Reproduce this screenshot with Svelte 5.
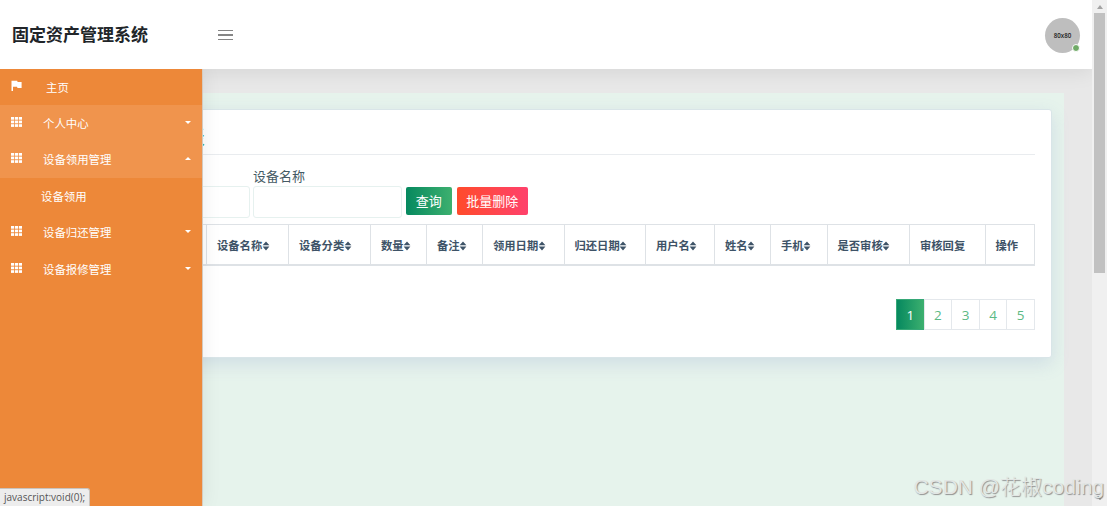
<script>
  let openMenu = 2;
  let currentPage = 1;
  let deviceNo = '';
  let deviceName = '';

  const menus = [
    { label: '个人中心', light: true, children: [] },
    { label: '设备领用管理', light: true, children: ['设备领用'] },
    { label: '设备归还管理', children: [] },
    { label: '设备报修管理', children: [] }
  ];

  // the first column only holds the row checkboxes
  const columns = [
    { label: '', width: 67 },
    { label: '设备编号', width: 81, sortable: true },
    { label: '设备名称', width: 82, sortable: true },
    { label: '设备分类', width: 82, sortable: true },
    { label: '数量', width: 56, sortable: true },
    { label: '备注', width: 56, sortable: true },
    { label: '领用日期', width: 81.5, sortable: true },
    { label: '归还日期', width: 81.5, sortable: true },
    { label: '用户名', width: 69, sortable: true },
    { label: '姓名', width: 56, sortable: true },
    { label: '手机', width: 56.5, sortable: true },
    { label: '是否审核', width: 82.5, sortable: true },
    { label: '审核回复', width: 75.5 },
    { label: '操作', width: 50 }
  ];

  const pages = [1, 2, 3, 4, 5];
</script>

<div class="page">
  <header class="topbar">
    <h1>固定资产管理系统</h1>
    <button class="toggle" aria-label="menu"><span></span><span></span><span></span></button>
    <div class="avatar"><span>80x80</span><i class="status"></i></div>
  </header>

  <div class="body">
    <nav class="sidebar">
      <a class="item home" href="javascript:void(0);">
        <svg class="flag" width="11" height="12" viewBox="0 0 11 12"><path d="M0.5 0.7h5.7l.4 1.4h4v6H6.5L6 6.7H2V11H.5z" /></svg>
        <span>主页</span>
      </a>
      {#each menus as menu, i}
        <a class="item" class:light={menu.light} href="javascript:void(0);">
          <svg class="grid" width="11" height="10" viewBox="0 0 11 10">
            {#each [0, 1, 2] as row}
              {#each [0, 1, 2] as col}
                <rect x={col * 4} y={row * 3.6} width="3.2" height="2.7" />
              {/each}
            {/each}
          </svg>
          <span>{menu.label}</span>
          <i class="caret" class:up={i + 1 === openMenu}></i>
        </a>
        {#if i + 1 === openMenu}
          {#each menu.children as child}
            <a class="item sub" href="javascript:void(0);">{child}</a>
          {/each}
        {/if}
      {/each}
    </nav>

    <main class="panel">
      <section class="card">
        <h3>列表</h3>
        <form class="search">
          <label>设备编号<input bind:value={deviceNo} /></label>
          <label>设备名称<input bind:value={deviceName} /></label>
          <button type="button" class="btn query">查询</button>
          <button type="button" class="btn delete">批量删除</button>
        </form>
        <div class="table">
          {#each columns as column}
            <div class="th" style="width: {column.width}px">
              {column.label}{#if column.sortable}<svg width="8" height="10" viewBox="0 0 8 10"><path d="M4 .4L7.4 4.3H.6zM4 9.6L7.4 5.5H.6z" /></svg>{/if}
            </div>
          {/each}
        </div>
        <div class="pagination">
          {#each pages as page}
            <button class:active={page === currentPage} on:click={() => (currentPage = page)}>{page}</button>
          {/each}
        </div>
      </section>
    </main>
  </div>

  <div class="scrollbar">
    <i class="arrow up"></i>
    <div class="thumb"></div>
    <i class="arrow down"></i>
  </div>
  <div class="link-status">javascript:void(0);</div>
  <div class="watermark">CSDN @花椒coding</div>
</div>

<style>
  :global(body) {
    margin: 0;
    overflow: hidden;
  }

  .page {
    position: relative;
    box-sizing: border-box;
    width: 1107px;
    height: 506px;
    padding-right: 15px;
    overflow: hidden;
    background: #e8e8e8;
    color: #455a64;
    font-family: 'Open Sans', 'Noto Sans CJK SC', sans-serif;
  }

  button,
  input {
    box-sizing: border-box;
    font: inherit;
  }

  .topbar {
    position: relative;
    z-index: 2;
    display: flex;
    align-items: center;
    box-sizing: border-box;
    height: 69px;
    padding: 0 12px;
    background: #fff;
    box-shadow: 0 2px 20px rgba(0, 0, 0, 0.09);
  }

  h1 {
    width: 206px;
    margin: 0;
    color: #212529;
    font-size: 17px;
    line-height: 24px;
    font-weight: 700;
  }

  .toggle {
    display: flex;
    flex-direction: column;
    gap: 3px;
    width: 15px;
    margin-top: 1px;
    padding: 0;
    border: 0;
    background: none;
  }

  .toggle span {
    height: 1.5px;
    background: #858585;
  }

  .avatar {
    position: relative;
    width: 35px;
    height: 35px;
    margin: 1px 0 0 auto;
    border-radius: 50%;
    background: #bebebe;
    color: #222;
    font-size: 6.5px;
    font-weight: 600;
    line-height: 35px;
    text-align: center;
  }

  .avatar span {
    display: block;
    transform: scaleX(0.95);
  }

  .status {
    position: absolute;
    right: 0;
    bottom: 1px;
    width: 6px;
    height: 6px;
    border: 1px solid #fff;
    border-radius: 50%;
    background: #6faa66;
  }

  .body {
    position: relative;
    height: 437px;
    padding: 24px 28px 0;
  }

  .sidebar {
    position: absolute;
    z-index: 3;
    top: 0;
    left: 0;
    width: 202px;
    height: 437px;
    background: #ed8839;
    box-shadow: 1px 0 18px rgba(0, 0, 0, 0.08), 1px 0 0 #ddd2c5;
    clip-path: inset(0 -24px 0 0);
  }

  .item {
    display: flex;
    align-items: center;
    box-sizing: border-box;
    height: 36.4px;
    padding: 0 11px;
    color: #fff;
    font-size: 11.4px;
    line-height: 17px;
    text-decoration: none;
  }

  .item svg {
    margin: -3px 21px 0 0;
    fill: #fff;
  }

  .item.home svg {
    margin-right: 24px;
  }

  .item.light {
    background: #f0944d;
  }

  .item.sub {
    padding-left: 41px;
  }

  .caret {
    margin: -2px 0 0 auto;
    border: 3px solid transparent;
    border-top-color: #fff;
    border-bottom: 0;
  }

  .caret.up {
    border-top: 0;
    border-bottom: 3px solid #fff;
  }

  .panel {
    box-sizing: border-box;
    height: 413px;
    padding: 16px 12px 16px 13px;
    background: #e6f3ec;
  }

  .card {
    box-sizing: border-box;
    height: 249px;
    padding: 15px 16px 0;
    border: 1px solid #d9e5e8;
    border-radius: 3px;
    background: #fff;
    box-shadow: 0 6px 18px rgba(120, 140, 200, 0.2);
  }

  h3 {
    box-sizing: border-box;
    height: 30px;
    margin: 0 0 12px;
    padding-left: 105px;
    border-bottom: 1px solid #e9ecef;
    color: #3cae75;
    font-size: 21px;
    font-weight: 400;
    line-height: 22px;
  }

  .search {
    display: flex;
    align-items: flex-end;
    height: 51px;
    padding-left: 43px;
  }

  label {
    width: 149px;
    margin-right: 3px;
    font-size: 13px;
    line-height: 19px;
  }

  input {
    display: block;
    width: 149px;
    height: 32px;
    border: 1px solid #e6f1ef;
    border-radius: 3px;
    background: #fff;
  }

  .btn {
    height: 28px;
    margin: 0 5px 3px 0;
    padding: 0;
    border: 0;
    border-radius: 2px;
    color: #fff;
    font-size: 13px;
    line-height: 28px;
  }

  .query {
    width: 45.5px;
    margin-left: 1px;
    background: linear-gradient(90deg, #06895f, #3db06f);
  }

  .delete {
    width: 71.5px;
    background: linear-gradient(90deg, #ff4b2b, #ff416c);
  }

  .table {
    display: flex;
    box-sizing: border-box;
    height: 42px;
    margin-top: 6px;
    border: 1px solid #dee2e6;
    border-width: 1px 0 2px 1px;
  }

  .th {
    flex: none;
    box-sizing: border-box;
    padding: 13px 0 0 10px;
    border-right: 1px solid #dee2e6;
    color: #3e5367;
    font-size: 11.3px;
    font-weight: 600;
    line-height: 16px;
    white-space: nowrap;
  }

  .th:last-child {
    flex: 1;
  }

  .th svg {
    margin-left: -0.5px;
    vertical-align: -1px;
    fill: #3e5367;
  }

  .pagination {
    display: flex;
    justify-content: flex-end;
    margin-top: 33px;
  }

  .pagination button {
    width: 28.6px;
    height: 31px;
    margin-left: -1px;
    padding: 0;
    border: 1px solid #e4e8ec;
    background: #fff;
    color: #5cb984;
    font-size: 13.5px;
  }

  .pagination .active {
    border-color: #36a877;
    background: linear-gradient(90deg, #06895f, #3db06f);
    color: #fff;
  }

  .scrollbar {
    position: absolute;
    z-index: 4;
    top: 0;
    right: 0;
    display: flex;
    flex-direction: column;
    align-items: center;
    box-sizing: border-box;
    width: 15px;
    height: 506px;
    padding: 5px 0 6px;
    background: #f0f0f0;
  }

  .thumb {
    width: 11px;
    height: 260px;
    margin: 4px 0 auto;
    background: #c1c1c1;
  }

  .arrow {
    border: 3px solid transparent;
  }

  .arrow.up {
    border-top: 0;
    border-bottom: 4px solid #a3a3a3;
  }

  .arrow.down {
    border-top: 4px solid #505050;
    border-bottom: 0;
  }

  .link-status {
    position: absolute;
    z-index: 4;
    bottom: 0;
    left: 0;
    box-sizing: border-box;
    width: 90px;
    height: 18px;
    padding-left: 4px;
    border-top: 1px solid #c9c3bd;
    border-right: 1px solid #c9c3bd;
    border-top-right-radius: 3px;
    background: #ededed;
    color: #555;
    font-size: 10px;
    line-height: 16px;
  }

  .watermark {
    position: absolute;
    z-index: 5;
    right: 3px;
    bottom: 4px;
    color: #e2e6e4;
    font-family: 'Liberation Sans', 'Noto Sans CJK SC', sans-serif;
    font-size: 21px;
    font-weight: 300;
    line-height: 30px;
    text-shadow: 1px 1px 1px #909090;
    white-space: nowrap;
  }
</style>
